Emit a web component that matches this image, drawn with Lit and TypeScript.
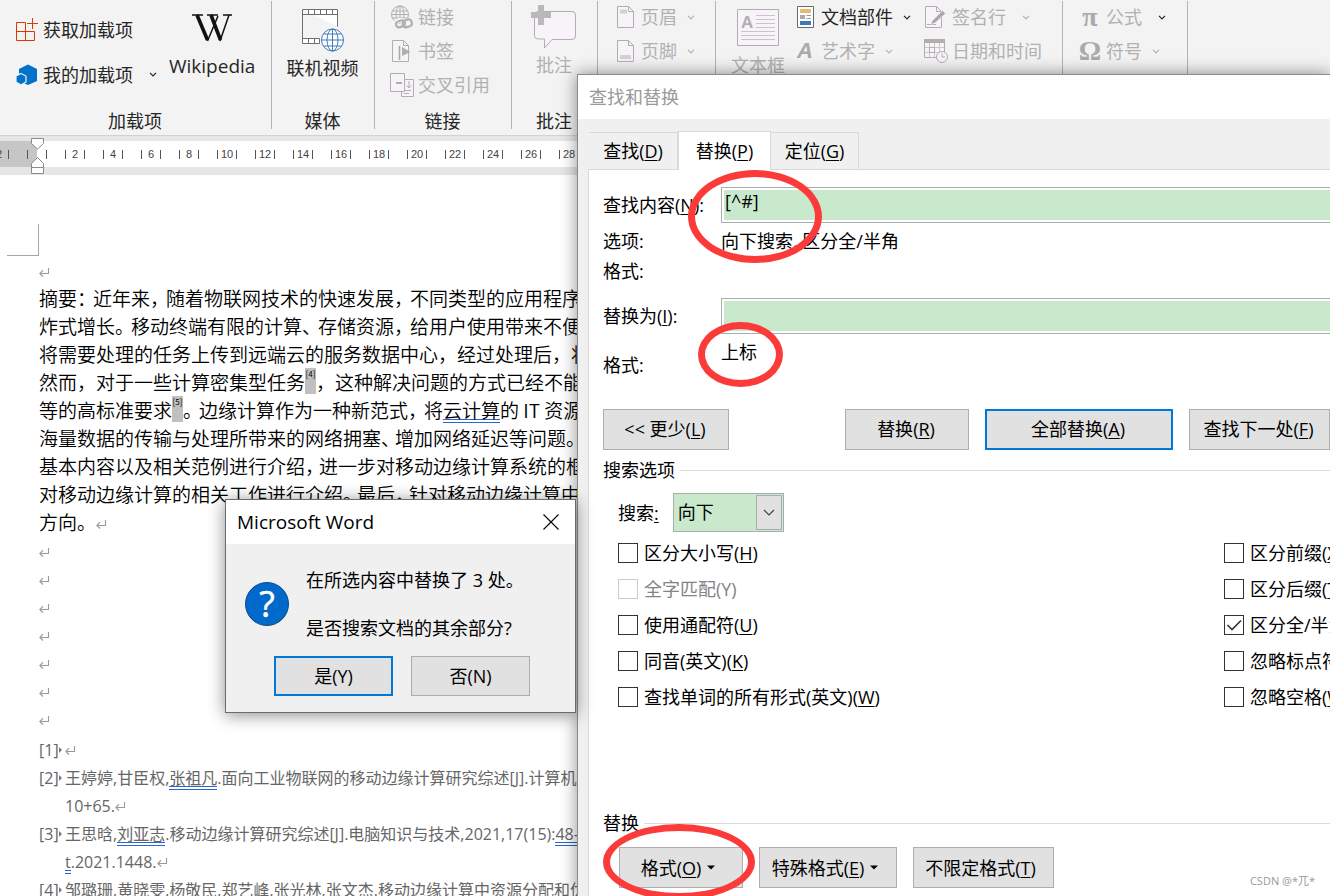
import { LitElement, html, svg, css, nothing } from "lit";
import { customElement, property } from "lit/decorators.js";

const key = (text: string, k = "", tail = "") =>
  html`${text}${k ? html`(<u>${k}</u>)` : nothing}${tail}`;

const chevron = (cls = "") => html`<svg class="chev ${cls}" width="8" height="5" viewBox="0 0 8 5">
  <path d="M1 .8 4 3.8 7 .8" fill="none" stroke="currentColor" stroke-width="1.2" /></svg>`;

const mark = html`<svg class="mark" width="11" height="9" viewBox="0 0 11 9">
  <path d="M9.5 0v5.500H1.200M4 2.200.9 5.500 4 8.500" fill="none" stroke="currentColor" stroke-width="1.100" /></svg>`;

const page = svg`<path d="M.5 .5h11l5 5v16h-16z" fill="#f7f3f8" stroke="#b1aeb1"/><path d="M11.500 .5v5h5" fill="none" stroke="#b1aeb1"/>`;

const icons: Record<string, unknown> = {
  store: html`<svg width="24" height="24" viewBox="0 0 24 24" fill="none" stroke="#d83b01">
    <path d="M10.500 4.500h-9v18h18v-9h-18M10.500 4.500v18M17.500 0v11M12 5.500h11" /></svg>`,
  addin: html`<svg width="24" height="24" viewBox="0 0 24 24"><path d="M13 1.500 22 6v12l-9 4-9-4V6z" fill="#0072c9" />
    <path d="M6 10.500 11 13v6l-5 3-5-3v-6z" fill="#0072c9" stroke="#f3f3f3" stroke-width="1.200" /></svg>`,
  wiki: html`<svg width="42" height="30" viewBox="0 0 42 30" fill="none" stroke="#111">
    <path d="M1 2h11M16 2h11M32 2h9" stroke-width="1.500" /><path d="M6 2 16.500 27M20 2 29.500 27" stroke-width="3.600" />
    <path d="M16.500 28 27 3M29 28 38 2" stroke-width="1.500" /></svg>`,
  video: html`<svg width="44" height="44" viewBox="0 0 44 44" fill="none" stroke="#6f6f6f">
    <path d="M1.500 1.500h35v17M1.500 1.500v34h17v-5h-17M1.500 6.500h35" fill="#fff" />
    <path d="M7.500 1.500v5M13.500 1.500v5M19.500 1.500v5M25.500 1.500v5M31.500 1.500v5M7.500 30.500v5M13.500 30.500v5" />
    <g stroke="#3f7ab8"><circle cx="31.500" cy="32" r="11" fill="#fff" /><ellipse cx="31.500" cy="32" rx="5.500" ry="11" /><path d="M31.500 21v22M20.500 32h22M22.500 26h18M22.500 38h18" /></g></svg>`,
  link: html`<svg width="24" height="24" viewBox="0 0 24 24" fill="none" stroke="#b1aeb1">
    <circle cx="10" cy="9.500" r="8.500" /><ellipse cx="10" cy="9.500" rx="4" ry="8.500" /><path d="M10 1v17M2 6h16M2 13h16M1.500 9.500h17" />
    <g stroke="#f3f3f3" stroke-width="5"><rect x="6" y="15.500" width="9" height="6" rx="3" /><rect x="13" y="16" width="9" height="6" rx="3" /></g>
    <g stroke-width="2.200"><rect x="6" y="16" width="9" height="6" rx="3" transform="rotate(-18 10 19)" /><rect x="13" y="15" width="9" height="7" rx="3" transform="rotate(-18 17 19)" /></g></svg>`,
  bookmark: html`<svg width="20" height="23" viewBox="0 0 20 23">${page}<path d="M7.500 6v14" stroke="#aaa" stroke-width="1.600" /><path d="M10 7l8.500 5-8.500 4z" fill="#b1aeb1" /></svg>`,
  cross: html`<svg width="24" height="24" viewBox="0 0 24 24" fill="#f7f3f8" stroke="#b1aeb1">
    <path d="M11.500 6.500h12v17h-12z" /><path d="M.5 .5h14v18H.5z" /><path d="M6 10h6" stroke-width="2" /><path d="M19 8v7M16.500 12.500 19 15l2.500-2.500M14 17.500h7M14 20.500h5" fill="none" /></svg>`,
  comment: html`<svg width="46" height="44" viewBox="0 0 46 44"><path d="M7 6.500h34q3.500 0 3.500 3.500v21q0 3.500-3.500 3.500H21L13.500 43v-9H7q-3.500 0-3.500-3.500V10q0-3.500 3.500-3.500z" fill="#f7f3f8" stroke="#b1aeb1" />
    <path d="M7 0h6v7h7v6h-7v7H7v-7H0V7h7z" fill="#bbb8bb" /></svg>`,
  header: html`<svg width="17" height="22" viewBox="0 0 17 22">${page}<path d="M3 3.500h7v4H3z" fill="#d5d0d5" /></svg>`,
  footer: html`<svg width="17" height="22" viewBox="0 0 17 22">${page}<path d="M3 15h11v4H3z" fill="#d5d0d5" /></svg>`,
  textbox: html`<svg width="42" height="37" viewBox="0 0 42 37"><path d="M.5 .5h41v36H.5z" fill="#f7f3f8" stroke="#b1aeb1" />
    <text x="4" y="19" font-family="Liberation Sans" font-weight="700" font-size="17" fill="#b1aeb1">A</text>
    <path d="M19 6.500h19M19 10.500h19M19 14.500h19M19 18.500h19M4 22.500h34M4 26.500h34M4 30.500h34" stroke="#c9c4c9" /></svg>`,
  parts: html`<svg width="17" height="22" viewBox="0 0 17 22"><path d="M.5 .5h16v21H.5z" fill="#fff" stroke="#6a6a6a" />
    <path d="M3 3h11v4H3z" fill="#e9b872" /><path d="M3 9h5v4H3z" fill="#aaa" /><path d="M9.500 9.500H14M9.500 12.500H14" stroke="#999" /><path d="M3 15h11v4H3z" fill="#3f7ab8" /></svg>`,
  sign: html`<svg width="22" height="22" viewBox="0 0 22 22">${page}<path d="M2 18.500h9" stroke="#b1aeb1" /><path d="M7 15 17.500 4.500l3 3L10 17l-4 1.500z" fill="#aba8ab" stroke="#f3f3f3" stroke-width=".6" /></svg>`,
  date: html`<svg width="25" height="25" viewBox="0 0 25 25" fill="#f7f3f8" stroke="#b1aeb1"><path d="M.5 1.500h20v17H.5z" /><path d="M0 2h21" stroke-width="4" />
    <path d="M1 8.500h19M1 13.500h19M5.500 4v14M10.500 4v14M15.500 4v14" stroke="#cbc7cb" /><path d="M5.500 8.500h5v5h-5z" fill="none" /><circle cx="18" cy="18" r="5.500" /><path d="M18 14.500V18h3" fill="none" /></svg>`,
  art: html`<span class="glyph art">A</span>`,
  pi: html`<span class="glyph">π</span>`,
  omega: html`<span class="glyph">Ω</span>`,
  peek: html`<svg width="17" height="22" viewBox="0 0 17 22">${page}</svg>`,
};

@customElement("ribbon-item")
class RibbonItem extends LitElement {
  @property() icon = "";
  @property() text = "";
  @property({ type: Boolean }) big = false;
  @property({ type: Boolean }) off = false;
  @property({ type: Boolean }) menu = false;
  @property({ type: Boolean }) wide = false;
  @property({ type: Boolean }) live = false;
  static styles = css`
    :host { display: block; flex: none; }
    button {
      display: flex; align-items: center; gap: 4px; height: 100%; padding: 0; border: 0;
      background: none; color: #262626; white-space: nowrap;
      font: 18px/24px "Open Sans", "Noto Sans CJK SC", sans-serif;
    }
    button:disabled { color: #b1b1b1; }
    .icon { display: flex; justify-content: center; align-items: center; width: 24px; }
    .big { flex-direction: column; gap: 3px; height: auto; }
    .big .icon { width: auto; height: 46px; }
    .latin { font-size: 19px; }
    .chev { margin-left: 6px; flex: none; }
    .wide .chev { margin-left: 12px; }
    .live .chev { color: #262626; }
    .glyph { font: bold 28px/28px "Liberation Serif", serif; color: #aaa; }
    .art { font: italic bold 22px/24px "Liberation Sans", sans-serif; }
    svg { flex: none; }
  `;
  render() {
    const cls = [this.big && "big", this.wide && "wide", this.live && "live"].filter(Boolean).join(" ");
    const latin = /^[A-Za-z]+$/.test(this.text) ? "latin" : "";
    return html`<button class=${cls} ?disabled=${this.off}>
      <span class="icon">${icons[this.icon]}</span><span class=${latin}>${this.text}</span>${this.menu ? chevron() : nothing}
    </button>`;
  }
}

const uiFont = css`"Open Sans", "Noto Sans CJK SC", sans-serif`;

@customElement("find-dialog")
class FindDialog extends LitElement {
  static styles = css`
    :host { display: flex; flex-direction: column; box-sizing: border-box; background: #f0f0f0; color: #000;
      border: solid #8b8b8b; border-width: 1px 0 0 1px; box-shadow: 0 0 16px rgba(0, 0, 0, .45);
      font: 18px/24px ${uiFont}; white-space: nowrap; }
    * { box-sizing: border-box; }
    u { text-underline-offset: 2px; text-decoration-thickness: 1px; }
    header { height: 44px; padding: 10px 11px; background: #fff; color: #999; flex: none; }
    .tabs { display: flex; align-items: flex-end; padding: 12px 0 0 11px; flex: none; }
    .tab { height: 37px; padding: 0 14px; font: inherit; background: #f0f0f0; border: 1px solid #d9d9d9; border-width: 1px 1px 0 0; }
    .tab:first-child { width: 89px; }
    .tab:last-child { width: 88px; padding: 0 12px; }
    .tab.on { height: 39px; width: 93px; background: #fff; border-left-width: 1px; margin-bottom: -1px; z-index: 1; }
    .panel { flex: 1; margin-left: 10px; padding: 17px 0 0 14px; background: #fff; border: solid #d9d9d9; border-width: 1px 0 0 1px; }
    .fields { display: grid; grid-template-columns: 118px minmax(0, 1fr); align-items: center; }
    .fields input { width: 100%; height: 36px; padding: 0 3px 8px; font: inherit; color: #000; background: #c9e9cd;
      border: 1px solid #ababb2; border-right: 0; box-shadow: inset 2px 2px #fff, inset 0 -2px #fff; border-radius: 0; }
    .opts { height: 38px; line-height: 36px; }
    .fmt { height: 37px; line-height: 20px; }
    .rep { height: 75px; line-height: 62px; }
    .rep.val { line-height: 36px; }
    .btn { height: 41px; padding: 0 2px 2px 0; font: inherit; color: #000; background: #e1e1e1; border: 1px solid #adadad; }
    .btn.main { border: 2px solid #0078d7; }
    .btns { display: grid; grid-template-columns: 126px minmax(0, 1fr) 124px 188px 141px; column-gap: 16px; }
    .btns .rest { grid-column: 3; }
    .rule { display: flex; align-items: center; gap: 5px; height: 24px; }
    .rule::after { content: ""; flex: 1; height: 1px; background: #dcdcdc; }
    .first { margin-top: 8px; }
    .search { display: flex; align-items: center; gap: 14px; margin: 11px 0 3px 15px; }
    .pick { position: relative; width: 111px; height: 39px; }
    select { width: 100%; height: 100%; padding: 0 4px 2px; appearance: none; font: inherit; color: #000; background: #c9e9cd;
      border: 1px solid #ababb2; border-radius: 0; }
    .drop { position: absolute; top: 2px; right: 2px; bottom: 2px; width: 26px; display: flex; align-items: center; justify-content: center;
      background: #e1e1e1; border: 1px solid #adadad; pointer-events: none; }
    .checks { display: grid; grid-template-columns: minmax(0, 1fr) 106px; grid-auto-rows: 36px; align-items: center; padding-left: 15px; }
    .check { display: flex; align-items: center; gap: 6px; }
    .check input { appearance: none; flex: none; width: 20px; height: 20px; margin: 0; border: 1px solid #333; background: #fff; }
    .check input:checked { background: #fff url("data:image/svg+xml,%3Csvg xmlns='http://www.w3.org/2000/svg' viewBox='0 0 18 18'%3E%3Cpath d='M2.500 9 7 13.500 16 4.500' fill='none' stroke='%23333' stroke-width='1.600'/%3E%3C/svg%3E"); }
    .check input:disabled { border-color: #ccc; }
    .gray { color: #838383; }
    .second { margin-top: 96px; }
    .formats { display: flex; gap: 16px; padding: 12px 0 0 16px; }
    .formats .btn { display: flex; align-items: center; justify-content: center; gap: 6px; padding: 0 6px 0 0; }
    .f1 { width: 124px; } .f2 { width: 138px; } .f3 { width: 141px; }
  `;
  check(text: string, k: string, on = false, off = false) {
    return html`<label class="check ${off ? "gray" : ""}"><input type="checkbox" ?checked=${on} ?disabled=${off} />
      <span>${off ? `${text}(${k})` : key(text, k)}</span></label>`;
  }
  render() {
    const tri = html`<svg width="8" height="5" viewBox="0 0 8 5"><path d="M0 .5h8L4 4.500z" /></svg>`;
    return html`
      <header>查找和替换</header>
      <div class="tabs" role="tablist">
        <button class="tab" role="tab">${key("查找", "D")}</button>
        <button class="tab on" role="tab" aria-selected="true">${key("替换", "P")}</button>
        <button class="tab" role="tab">${key("定位", "G")}</button>
      </div>
      <div class="panel">
        <div class="fields">
          <label for="find">${key("查找内容", "N", ":")}</label><input id="find" .value=${"[^#]"} />
          <span class="opts">选项:</span><span class="opts">向下搜索, 区分全/半角</span>
          <span class="fmt">格式:</span><span></span>
          <label for="with">${key("替换为", "I", ":")}</label><input id="with" />
          <span class="rep">格式:</span><span class="rep val">上标</span>
        </div>
        <div class="btns">
          <button class="btn">&lt;&lt; ${key("更少", "L")}</button>
          <button class="btn rest">${key("替换", "R")}</button>
          <button class="btn main">${key("全部替换", "A")}</button>
          <button class="btn">${key("查找下一处", "F")}</button>
        </div>
        <div class="rule first">搜索选项</div>
        <div class="search"><label for="dir">搜索<u>:</u></label>
          <div class="pick"><select id="dir"><option>向下</option><option>向上</option><option>全部</option></select>
            <span class="drop"><svg width="12" height="8" viewBox="0 0 12 8"><path d="M1 1l5 5 5-5" fill="none" stroke="#444" stroke-width="1.200" /></svg></span></div>
        </div>
        <div class="checks">
          ${this.check("区分大小写", "H")}${this.check("区分前缀", "X")}
          ${this.check("全字匹配", "Y", false, true)}${this.check("区分后缀", "T")}
          ${this.check("使用通配符", "U")}${this.check("区分全/半角", "M", true)}
          ${this.check("同音(英文)", "K")}${this.check("忽略标点符号", "S")}
          ${this.check("查找单词的所有形式(英文)", "W")}${this.check("忽略空格", "W")}
        </div>
        <div class="rule second">替换</div>
        <div class="formats">
          <button class="btn f1"><span>${key("格式", "O")}</span>${tri}</button>
          <button class="btn f2"><span>${key("特殊格式", "E")}</span>${tri}</button>
          <button class="btn f3"><span>${key("不限定格式", "T")}</span></button>
        </div>
      </div>`;
  }
}

@customElement("message-dialog")
class MessageDialog extends LitElement {
  static styles = css`
    :host { display: block; box-sizing: border-box; border: 1px solid #6b6b6b; background: #f0f0f0; color: #000;
      box-shadow: 0 2px 16px rgba(0, 0, 0, .45); font: 18px/24px ${uiFont}; }
    header { display: flex; align-items: center; justify-content: space-between; height: 44px; padding: 0 16px 0 11px; background: #fff; font-size: 19px; }
    .close { display: flex; padding: 0; border: 0; background: none; }
    .body { display: flex; align-items: center; gap: 17px; padding: 24px 19px 0; }
    .body svg { flex: none; }
    p { margin: 0 0 24px; white-space: nowrap; }
    p:last-child { margin: 0; }
    .actions { display: flex; justify-content: flex-end; gap: 18px; padding: 16px 45px 16px 0; }
    .actions button { width: 119px; height: 40px; padding: 0; font: inherit; color: #000; background: #e1e1e1; border: 1px solid #adadad; }
    .actions .main { border: 2px solid #0078d7; }
  `;
  render() {
    return html`<header><span>Microsoft Word</span>
        <button class="close" aria-label="关闭"><svg width="16" height="16" viewBox="0 0 16 16"><path d="M.5 .5l15 15M15.500 .5l-15 15" stroke="#000" stroke-width="1.100" /></svg></button></header>
      <div class="body">
        <svg width="44" height="44" viewBox="0 0 44 44"><circle cx="22" cy="22" r="21.500" fill="#0069c9" stroke="#0b4c86" />
          <text x="22" y="35" text-anchor="middle" font-family="Open Sans" font-size="36" fill="#fff" stroke="#fff" stroke-width=".5">?</text></svg>
        <div><p>在所选内容中替换了 3 处。</p><p>是否搜索文档的其余部分?</p></div>
      </div>
      <div class="actions"><button class="main">是(Y)</button><button>否(N)</button></div>`;
  }
}

/* Squeezes the advance of full-width punctuation, as a justified line does. */
const line = (text: string, cls = "") =>
  cls ? text.split(/([，。、：])/).map((t, i) => (i % 2 ? html`<span class=${cls}>${t}</span>` : t)) : text;

@customElement("app-root")
class AppRoot extends LitElement {
  static styles = css`
    :host { display: flex; flex-direction: column; position: relative; height: 100vh; overflow: hidden; background: #fff; font: 18px/24px ${uiFont}; }
    * { box-sizing: border-box; }
    .ribbon { display: flex; flex: none; height: 136px; background: #f3f3f3; border-bottom: 1px solid #d2d2d2; }
    .group { position: relative; display: flex; flex-direction: column; flex: none; }
    .group::after { content: ""; position: absolute; right: 0; top: 1px; bottom: 6px; width: 1px; background: #b3b3b3; }
    .items { display: flex; flex: 1; justify-content: center; min-height: 0; padding-right: 2px; }
    .label { height: 26px; padding-right: 2px; text-align: center; color: #262626; }
    .col { display: grid; grid-auto-rows: 34px; align-content: start; }
    .g1 { width: 272px; } .g2 { width: 103px; } .g3 { width: 137px; } .g4 { width: 86px; } .g5 { width: 118px; } .g6 { width: 347px; } .g7 { width: 125px; }
    .g1 .items, .g3 .items, .g5 .items, .g6 .items, .g7 .items { justify-content: flex-start; padding-left: 15px; }
    .g1 .col { grid-auto-rows: 45px; padding-top: 7px; width: 154px; }
    .g2 .items { padding-top: 7px; }
    .g4 .items { padding-top: 4px; }
    .wiki { padding-top: 5px; }
    .box { padding-top: 4px; }
    .g6 .col:nth-child(2) { margin-left: 8px; width: 131px; }
    .ruler { flex: none; height: 39px; padding: 5px 0 8px; background: #e6e6e6; position: relative; }
    .scale { display: flex; height: 26px; overflow: hidden; align-items: center; background: linear-gradient(to right, #c6c6c6 37px, #fff 37px);
      font: 11px/9px "Liberation Sans", sans-serif; color: #444; padding-left: 18px; }
    .scale .before { margin-left: -38px; }
    .cell { flex: none; width: 38px; display: flex; justify-content: center; }
    .tick { width: 20px; height: 9px; border: solid #555; border-width: 0 1px; text-align: center; }
    .indent { position: absolute; left: 31px; top: 2px; }
    .doc { flex: 1; padding: 49px 0 0 7px; white-space: nowrap; font: 350 19px/28px "Noto Sans CJK SC", sans-serif; color: #000; }
    .corner { width: 32px; height: 32px; border: solid #a6a6a6; border-width: 0 1px 1px 0; }
    .text { padding-left: 32px; }
    .text > div { height: 28px; }
    .mark { color: #999; vertical-align: 1px; }
    .p14, .p16 { display: inline-block; width: 14px; vertical-align: top; overflow: visible; }
    .p16 { width: 16px; }
    .cite { display: inline-block; vertical-align: top; width: 11px; height: 26px; background: #c0c0c0; font-size: 8px; font-weight: 400; line-height: 12px; text-align: center; }
    .err { display: inline-block; vertical-align: top; height: 27px; border-bottom: 4px double #2b64d0; }
    .ref { font: 16px/28px ${uiFont}; color: #666; display: flex; }
    .ref .err { height: 26px; }
    .refs { padding-top: 4px; }
    .num { width: 26px; flex: none; display: flex; align-items: center; }
    .num::after { content: ""; border: 3px solid transparent; border-left-color: #777; }
    .cont { padding-left: 26px; }
    find-dialog { position: absolute; left: 577px; top: 74px; right: 0; bottom: 0; }
    message-dialog { position: absolute; left: 225px; top: 499px; width: 351px; height: 214px; }
    .ring { position: absolute; border: 7px solid #fb3b39; border-radius: 50%; pointer-events: none; }
    .r1 { left: 688px; top: 170px; width: 134px; height: 93px; }
    .r2 { left: 698px; top: 322px; width: 85px; height: 65px; }
    .r3 { left: 603px; top: 824px; width: 152px; height: 76px; }
    .water { position: absolute; right: 15px; bottom: 6px; font-size: 11px; line-height: 18px; color: #999; }
  `;
  render() {
    const cell = (n: number | string) => html`<span class="cell"><span class="tick">${n}</span></span>`;
    const cite = (n: number) => html`<span class="cite">[${n}]</span>`;
    return html`
      <div class="ribbon">
        <div class="group g1"><div class="items">
          <div class="col"><ribbon-item icon="store" text="获取加载项"></ribbon-item><ribbon-item icon="addin" text="我的加载项" menu wide></ribbon-item></div>
          <ribbon-item class="wiki" icon="wiki" text="Wikipedia" big></ribbon-item></div><div class="label">加载项</div></div>
        <div class="group g2"><div class="items"><ribbon-item icon="video" text="联机视频" big></ribbon-item></div><div class="label">媒体</div></div>
        <div class="group g3"><div class="items"><div class="col">
          <ribbon-item icon="link" text="链接" off></ribbon-item><ribbon-item icon="bookmark" text="书签" off></ribbon-item>
          <ribbon-item icon="cross" text="交叉引用" off></ribbon-item></div></div><div class="label">链接</div></div>
        <div class="group g4"><div class="items"><ribbon-item icon="comment" text="批注" big off></ribbon-item></div><div class="label">批注</div></div>
        <div class="group g5"><div class="items"><div class="col">
          <ribbon-item icon="header" text="页眉" off menu></ribbon-item><ribbon-item icon="footer" text="页脚" off menu></ribbon-item>
          <ribbon-item icon="peek" text="页码" off menu></ribbon-item></div></div></div>
        <div class="group g6"><div class="items">
          <ribbon-item class="box" icon="textbox" text="文本框" big off></ribbon-item>
          <div class="col"><ribbon-item icon="parts" text="文档部件" menu></ribbon-item><ribbon-item icon="art" text="艺术字" off menu></ribbon-item></div>
          <div class="col"><ribbon-item icon="sign" text="签名行" off menu wide></ribbon-item><ribbon-item icon="date" text="日期和时间" off></ribbon-item>
            <ribbon-item icon="peek" text="对象" off menu></ribbon-item></div></div></div>
        <div class="group g7"><div class="items"><div class="col">
          <ribbon-item icon="pi" text="公式" off menu wide live></ribbon-item><ribbon-item icon="omega" text="符号" off menu></ribbon-item></div></div></div>
      </div>
      <div class="ruler"><div class="scale"><span class="before">${cell(2)}</span>
          ${Array.from({ length: 15 }, (_, i) => cell(i ? i * 2 : ""))}</div>
        <svg class="indent" width="13" height="37" viewBox="0 0 13 37" fill="#fff" stroke="#8a8a8a">
          <path d="M.5 .5h12v5l-6 5.500-6-5.500zM6.500 19.500l6 6v4H.5v-4zM.5 29.500h12v6H.5z" /></svg>
      </div>
      <div class="doc"><div class="corner"></div><div class="text">
        <div>${mark}</div>
        <div>${line("摘要：近年来，随着物联网技术的快速发展，不同类型的应用程序呈爆", "p16")}</div>
        <div>${line("炸式增长。移动终端有限的计算、存储资源，给用户使用带来不便，", "p16")}</div>
        <div>将需要处理的任务上传到远端云的服务数据中心，经过处理后，将</div>
        <div>然而，对于一些计算密集型任务${cite(4)}，这种解决问题的方式已经不能</div>
        <div>等的高标准要求${cite(5)}${line("。边缘计算作为一种新范式，将", "p16")}<span class="err">云计算</span>的 IT 资源</div>
        <div>${line("海量数据的传输与处理所带来的网络拥塞、增加网络延迟等问题。", "p14")}</div>
        <div>${line("基本内容以及相关范例进行介绍，进一步对移动边缘计算系统的框架", "p14")}</div>
        <div>${line("对移动边缘计算的相关工作进行介绍。最后，针对移动边缘计算中", "p14")}</div>
        <div>方向。${mark}</div>
        ${Array.from({ length: 7 }, () => html`<div>${mark}</div>`)}
      </div><div class="text refs">
        <div class="ref"><span class="num">[1]</span><span>${mark}</span></div>
        <div class="ref"><span class="num">[2]</span><span>王婷婷,甘臣权,<span class="err">张祖凡</span>.面向工业物联网的移动边缘计算研究综述[J].计算机应用</span></div>
        <div class="ref cont"><span>10+65.${mark}</span></div>
        <div class="ref"><span class="num">[3]</span><span>王思晗,<span class="err">刘亚志</span>.移动边缘计算研究综述[J].电脑知识与技术,2021,17(15):<span class="err">48-50</span></span></div>
        <div class="ref cont"><span><span class="err">t</span>.2021.1448.${mark}</span></div>
        <div class="ref"><span class="num">[4]</span><span>邹璐珊,黄晓雯,杨敬民,郑艺峰,张光林,张文杰.移动边缘计算中资源分配和优化</span></div>
      </div></div>
      <find-dialog></find-dialog>
      <message-dialog></message-dialog>
      <div class="ring r1"></div><div class="ring r2"></div><div class="ring r3"></div>
      <div class="water">CSDN @*兀*</div>`;
  }
}
